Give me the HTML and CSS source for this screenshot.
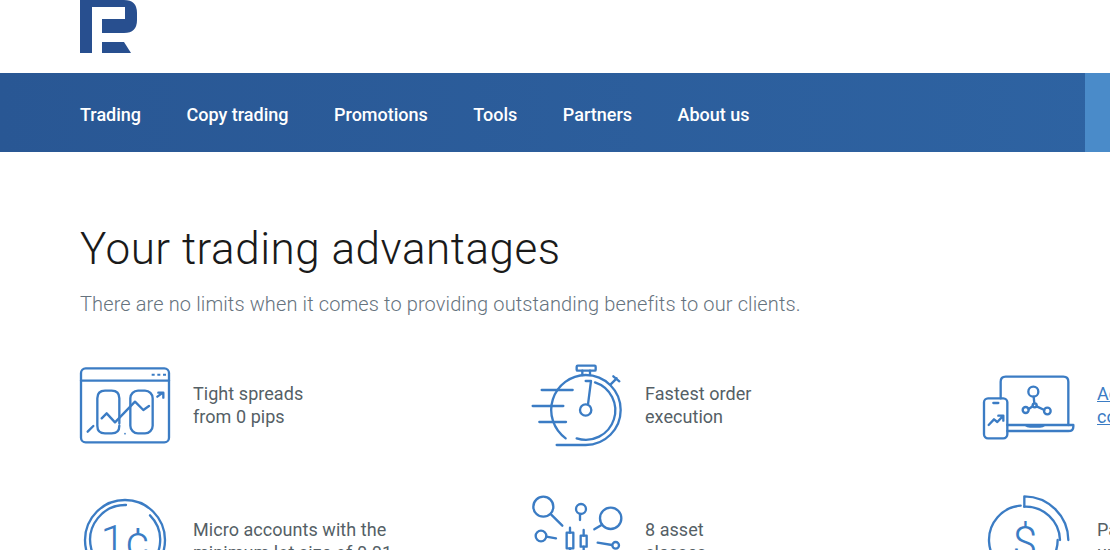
FILE: index.html
```html
<!DOCTYPE html>
<html lang="en">
<head>
<meta charset="utf-8">
<title>Your trading advantages</title>
<link rel="stylesheet" href="styles.css">
</head>
<body>
<header class="top">
  <a class="logo" href="#" aria-label="R logo">
    <svg width="57" height="53" viewBox="0 0 57 53"><path d="M0 0H44Q57 0 57 13V20Q57 33 44 33H22V19H45V7H12V53H0Z"/><path d="M22 42H44L51 53H22Z"/></svg>
  </a>
</header>
<nav class="nav">
  <ul class="menu">
    <li><a href="#">Trading</a></li>
    <li><a href="#">Copy trading</a></li>
    <li><a href="#">Promotions</a></li>
    <li><a href="#">Tools</a></li>
    <li><a href="#">Partners</a></li>
    <li><a href="#">About us</a></li>
  </ul>
  <div class="nav-side"></div>
</nav>
<main class="main">
  <h1 class="title">Your trading advantages</h1>
  <p class="lead">There are no limits when it comes to providing outstanding benefits to our clients.</p>
  <div class="grid">
    <div class="item">
      <svg class="icon" viewBox="30 15 270 270">
        <rect x="33" y="40" width="264" height="222" rx="14"/>
        <path d="M33 77H297"/>
        <path class="dots" d="M245 59H254M262 59H271M279 59H288"/>
        <path d="M148 205V130Q148 107 125 107H105Q82 107 82 130V212Q82 235 105 235H125Q148 235 148 212"/>
        <rect x="181" y="107" width="67" height="128" rx="23"/>
        <path d="M53 230L70 213M95 190L110 175L135 202L195 140L220 165L237 153M262 125L279 113M265 113H280V128"/>
        <circle class="fill" cx="165" cy="236" r="2.5"/>
      </svg>
      <p class="label">Tight spreads<br>from 0 pips</p>
    </div>
    <div class="item">
      <svg class="icon" viewBox="36 15 270 270">
        <rect x="170" y="32" width="57" height="15" rx="3"/>
        <path d="M187 47V60M210 47V60"/>
        <path d="M137 250A105 105 0 0 1 197 60A105 105 0 0 1 197 270H110"/>
        <path d="M225 82A87 87 0 0 1 170 250"/>
        <path d="M272 88L290 70M280 64L298 79"/>
        <path d="M65 105H158M38 153H130M58 201H138"/>
        <path d="M197 78H213L204 148"/>
        <circle cx="197" cy="165" r="17"/>
      </svg>
      <p class="label">Fastest order<br>execution</p>
    </div>
    <div class="item">
      <svg class="icon" viewBox="42 0 270 270">
        <path d="M92 115V65Q92 50 107 50H280Q295 50 295 65V195"/>
        <path d="M112 195H310V200Q310 213 295 213H112"/>
        <path class="solid" d="M165 198H225Q220 203 210 203H180Q170 203 165 198Z"/>
        <rect x="42" y="115" width="70" height="120" rx="12"/>
        <path d="M70 129H85M56 195L72 178L82 186L100 167M85 167H100V182"/>
        <circle cx="190" cy="95" r="15"/>
        <circle cx="167" cy="150" r="9"/>
        <circle cx="232" cy="153" r="10"/>
        <circle cx="194" cy="136" r="6"/>
        <path d="M191 110L193 130M176 147L188 139M200 139L223 150"/>
      </svg>
      <p class="label link"><a href="#">Access to<br>copy trading</a></p>
    </div>
    <div class="item">
      <svg class="icon" viewBox="30 18 270 270">
        <circle cx="165" cy="150" r="120"/>
        <path d="M168 45A105 105 0 1 0 240 76"/>
        <text x="165" y="200" class="glyph">1¢</text>
      </svg>
      <p class="label">Micro accounts with the<br>minimum lot size of 0.01</p>
    </div>
    <div class="item">
      <svg class="icon" viewBox="36 18 270 270">
        <circle cx="70" cy="50" r="30"/>
        <path d="M93 73L127 107"/>
        <circle cx="183" cy="57" r="15"/>
        <path d="M180 72V90"/>
        <circle cx="272" cy="85" r="32"/>
        <path d="M246 104L223 118"/>
        <circle cx="63" cy="138" r="16"/>
        <path d="M79 140L108 145"/>
        <rect x="140" y="128" width="20" height="47"/>
        <path d="M150 113V128M150 175V180"/>
        <rect x="182" y="137" width="18" height="33"/>
        <path d="M191 120V137M191 170V180"/>
        <path d="M233 158L276 165"/>
        <circle cx="287" cy="166" r="10"/>
      </svg>
      <p class="label">8 asset<br>classes</p>
    </div>
    <div class="item">
      <svg class="icon" viewBox="42 18 270 270">
        <path d="M152 47A103 103 0 1 0 263 150"/>
        <path d="M163 50A103 103 0 0 1 270 150"/>
        <path d="M163 50V19A133 133 0 0 1 295 150"/>
        <text x="165" y="205" class="glyph">$</text>
      </svg>
      <p class="label">Payouts<br>up to</p>
    </div>
  </div>
</main>
</body>
</html>
```
FILE: styles.css
```css
* { box-sizing: border-box; }
html, body { margin: 0; height: 100%; overflow: hidden; background: #fff; }
body { font-family: Roboto, "Liberation Sans", sans-serif; color: #1a1a1a; }
.top { height: 73px; padding-left: 80px; }
.logo { display: block; width: 57px; height: 53px; }
.logo svg { display: block; fill: #284f8f; }
.nav { height: 79px; display: flex; justify-content: space-between; background: linear-gradient(90deg, #295794 0%, #2e63a2 100%); }
.menu { list-style: none; margin: 0; padding: 4px 0 0 80px; display: flex; align-items: center; gap: 45.5px; }
.menu a { color: #fff; text-decoration: none; font-size: 18px; font-weight: 500; }
.nav-side { width: 25px; background: #4a8bc9; }
.main { padding: 69px 0 0 80px; }
.title { margin: 0; font-size: 44px; line-height: 56px; font-weight: 300; letter-spacing: 0.52px; }
.lead { margin: 12px 0 0; font-size: 20px; line-height: 30px; font-weight: 300; letter-spacing: 0.12px; color: #66737e; }
.grid { margin-top: 41px; display: grid; grid-template-columns: repeat(3, 452px); grid-auto-rows: 136px; }
.item { display: flex; align-items: flex-start; gap: 23px; }
.icon { width: 90px; height: 90px; flex: none; fill: none; stroke: #3b7cc4; stroke-width: 7; stroke-linecap: round; stroke-linejoin: round; overflow: visible; }
.icon .fill, .icon .solid { fill: #3b7cc4; stroke: none; }
.icon .dots { stroke-width: 6; stroke-linecap: butt; }
.glyph { font-family: Roboto, sans-serif; font-weight: 300; font-size: 134px; fill: #3b7cc4; stroke: none; text-anchor: middle; }
.label { margin: 22px 0 0; font-size: 18px; line-height: 23px; letter-spacing: 0.05px; color: #555f66; white-space: nowrap; }
.link a { color: #3b7cc4; text-decoration: underline; }
```
